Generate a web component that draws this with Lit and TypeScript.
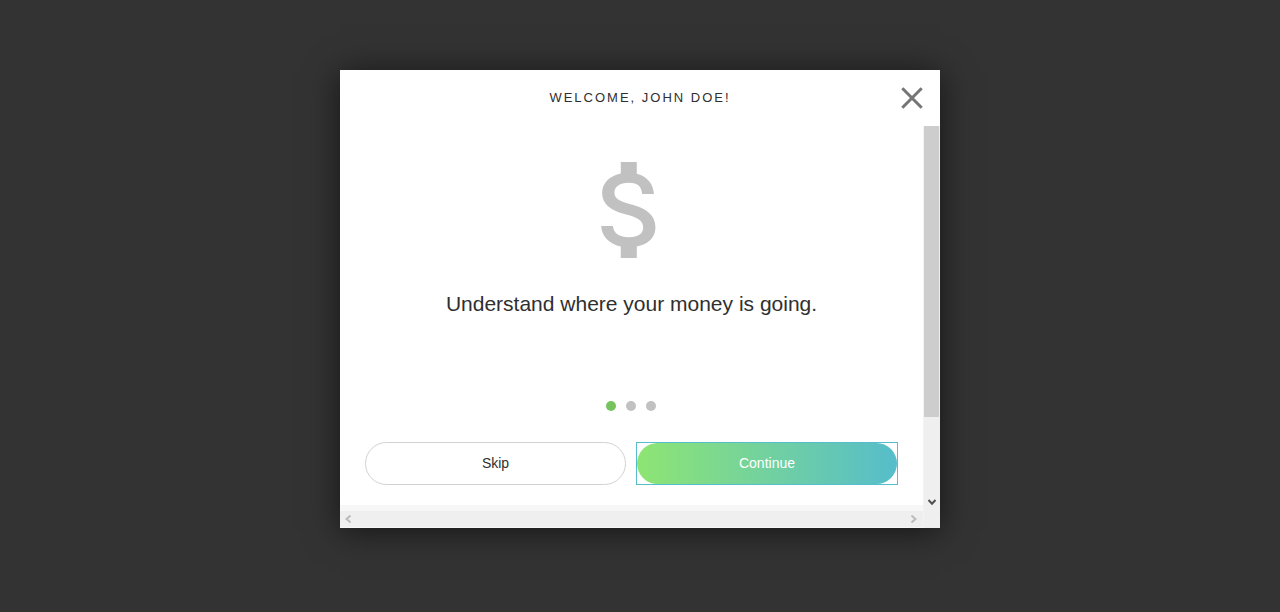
import { LitElement, html, css } from "lit";
import { customElement, state } from "lit/decorators.js";
import { classMap } from "lit/directives/class-map.js";

@customElement("app-root")
export class AppRoot extends LitElement {
  static styles = css`
    :host { display: flex; justify-content: center; align-items: flex-start; box-sizing: border-box;
      width: 100%; height: 612px; padding-top: 70px; overflow: hidden; background: #333;
      font-family: "Liberation Sans", Arial, sans-serif; color: #2f2f2f; }
    * { box-sizing: border-box; }
    .modal { width: 600px; height: 458px; background: #fff; display: flex; flex-direction: column;
      box-shadow: 0 3px 32px rgba(0, 0, 0, 0.6); }
    .header { height: 56px; flex: none; display: grid; grid-template-columns: 56px 1fr 56px; align-items: center; }
    .title { grid-column: 2; margin: 0; text-align: center; font-size: 13px; line-height: 20px;
      font-weight: 400; letter-spacing: 2px; }
    .close { border: 0; padding: 0; background: none; width: 56px; height: 56px; }
    svg { display: block; }
    .body { flex: 1; display: grid; grid-template-columns: 583px 17px; }
    .pane { display: flex; flex-direction: column; }
    .content { height: 379px; display: flex; flex-direction: column; align-items: center; padding: 20px 1px 0 0; }
    .dollar { width: 129px; height: 128px; flex: none; fill: #c1c1c1; padding-left: 1px; }
    .headline { margin: 16px 0 0 1px; font-size: 21px; line-height: 28px; font-weight: 400; white-space: nowrap; }
    .dots { display: flex; gap: 10px; margin-top: 83px; }
    .dot { width: 10px; height: 10px; border-radius: 50%; background: #c1c1c1; }
    .dot.active { background: #75c35f; }
    .actions { display: flex; gap: 10px; margin: 31px 0 0 1px; }
    .btn { width: 261px; height: 43px; padding: 0 0 1px; border: 1px solid #d2d2d2; border-radius: 22px; background: #fff;
      font: 14px/20px "Liberation Sans", Arial, sans-serif; color: #2f2f2f; }
    .focus { width: 262px; height: 43px; border: 1px solid #56bdcb; display: flex; }
    .focus .btn { width: 260px; height: 41px; border: 0; color: #fff;
      background: linear-gradient(90deg, #8ee573, #56bdcb); }
    .strip { height: 6px; background: #f7f7f7; }
    .hbar { height: 17px; background: #efefef; border-bottom: 1px solid #f7f7f7; display: flex; justify-content: space-between; padding: 0 6px 0 5px; align-items: center; }
    .vbar { background: #efefef; border-left: 1px solid #f3f3f3; display: flex; flex-direction: column; align-items: center; justify-content: space-between; }
    .thumb { width: 15px; height: 291px; background: #cdcdcd; align-self: flex-start; }
    .down { margin-bottom: 22px; }
  `;

  @state() private step = 0;

  render() {
    return html`
      <div class="modal" role="dialog">
        <header class="header">
          <h1 class="title">WELCOME, JOHN DOE!</h1>
          <button class="close" aria-label="Close">
            <svg width="56" height="56" viewBox="0 0 56 56"><path d="M18.3 18.3L37.7 37.7M37.7 18.3L18.3 37.7" stroke="#757575" stroke-width="3" fill="none"/></svg>
          </button>
        </header>
        <div class="body">
          <div class="pane">
            <main class="content">
              <svg class="dollar" viewBox="0.1 0 24 24"><path d="M11.8 10.9c-2.27-.59-3-1.2-3-2.15 0-1.09 1.01-1.85 2.7-1.85 1.78 0 2.44.85 2.5 2.1h2.21c-.07-1.72-1.12-3.3-3.21-3.81V3h-3v2.16c-1.94.42-3.5 1.68-3.5 3.61 0 2.31 1.91 3.46 4.7 4.13 2.5.6 3 1.48 3 2.41 0 .69-.49 1.79-2.7 1.79-2.06 0-2.87-.92-2.98-2.1h-2.2c.12 2.19 1.76 3.42 3.68 3.83V21h3v-2.15c1.95-.37 3.5-1.5 3.5-3.55 0-2.84-2.43-3.81-4.7-4.4z"/></svg>
              <h2 class="headline">Understand where your money is going.</h2>
              <div class="dots">
                ${[0, 1, 2].map((i) => html`<span class=${classMap({ dot: true, active: i === this.step })}></span>`)}
              </div>
              <div class="actions">
                <button class="btn">Skip</button>
                <div class="focus"><button class="btn" @click=${() => (this.step = Math.min(2, this.step + 1))}>Continue</button></div>
              </div>
            </main>
            <div class="strip"></div>
            <div class="hbar">
              <svg width="6" height="8" viewBox="0 0 6 8"><path d="M5.5 .5L1.5 4L5.5 7.5" stroke="#bcbcbc" stroke-width="2" fill="none"/></svg>
              <svg width="6" height="8" viewBox="0 0 6 8"><path d="M.5 .5L4.5 4L.5 7.5" stroke="#bcbcbc" stroke-width="2" fill="none"/></svg>
            </div>
          </div>
          <div class="vbar">
            <div class="thumb"></div>
            <svg class="down" width="8" height="7" viewBox="0 0 8 7"><path d="M.5 1L4 4.8L7.5 1" stroke="#505050" stroke-width="2" fill="none"/></svg>
          </div>
        </div>
      </div>`;
  }
}
